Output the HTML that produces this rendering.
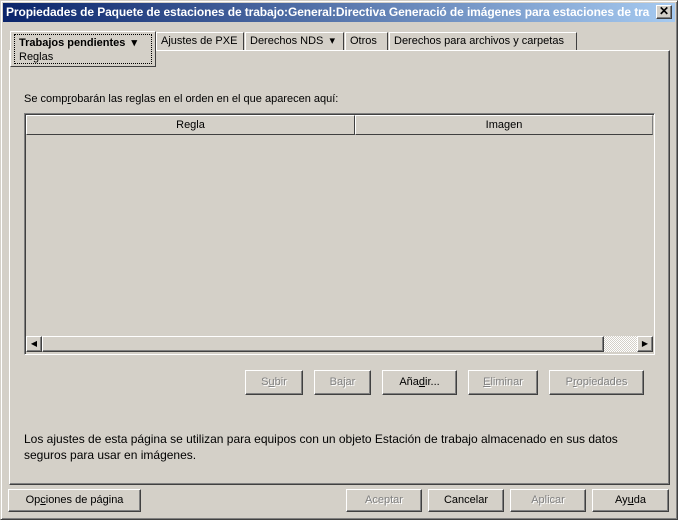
<!DOCTYPE html><html><head><style>
*{box-sizing:border-box}
body{margin:0;width:678px;height:520px;background:#d4d0c8;font-family:"Liberation Sans",sans-serif;font-size:11px;color:#000;position:relative;overflow:hidden}
.a{position:absolute}
.win{left:0;top:0;width:678px;height:520px;border:1px solid;border-color:#d4d0c8 #404040 #404040 #d4d0c8;box-shadow:inset 1px 1px #fff,inset -1px -1px #808080}
.title{left:3px;top:3px;width:672px;height:19px;background:linear-gradient(90deg,#0a246a,#a6caf0);}
.tt{left:6px;top:3px;width:646px;height:19px;color:#fff;font-weight:bold;font-size:12px;line-height:19px;white-space:nowrap;overflow:hidden;letter-spacing:-0.1px}
.btn{border:1px solid;border-color:#fff #404040 #404040 #fff;box-shadow:inset -1px -1px #808080;text-align:center;line-height:22px;background:#d4d0c8}
.dis{color:#808080;text-shadow:1px 1px #fff}
.tab{top:32px;height:18px;border:1px solid;border-color:#fff #404040 transparent #fff;border-bottom:none;line-height:16px;padding:0 4px;background:#d4d0c8;white-space:nowrap}
.raise{border:1px solid;border-color:#fff #808080 #808080 #fff}
</style></head><body>
<div class="a win"></div>
<div class="a title"></div>
<div class="a tt">Propiedades de Paquete de estaciones de trabajo:General:Directiva Generació de imágenes para estaciones de tra</div>
<div class="a btn" style="left:656px;top:5px;width:16px;height:14px;line-height:11px;font-weight:bold;font-size:12px">✕</div>
<div class="a" style="left:9px;top:50px;width:661px;height:435px;border:1px solid;border-color:#fff #404040 #404040 #fff;box-shadow:inset -1px -1px #808080"></div>
<div class="a tab" style="left:156px;width:88px">Ajustes de PXE</div>
<div class="a tab" style="left:245px;width:99px">Derechos NDS&nbsp; ▾</div>
<div class="a tab" style="left:345px;width:43px">Otros</div>
<div class="a tab" style="left:389px;width:188px">Derechos para archivos y carpetas</div>
<div class="a" style="left:10px;top:31px;width:146px;height:36px;border:1px solid;border-color:#fff #404040 #404040 #fff;background:#d4d0c8;padding:2px 3px">
<div style="border:1px dotted #000;height:30px;padding:1px 4px;line-height:14px"><b>Trabajos pendientes&nbsp; ▾</b><br>Reglas</div></div>
<div class="a" style="left:24px;top:93px">Se comp<u>r</u>obarán las reglas en el orden en el que aparecen aquí:</div>
<div class="a" style="left:24px;top:113px;width:631px;height:242px;border:1px solid;border-color:#808080 #fff #fff #808080;background:#d4d0c8;box-shadow:inset 1px 1px #404040"></div>
<div class="a raise" style="left:26px;top:115px;width:329px;height:20px;text-align:center;line-height:18px;border-right-color:#404040;border-bottom-color:#404040">Regla</div>
<div class="a raise" style="left:355px;top:115px;width:298px;height:20px;text-align:center;line-height:18px;border-bottom-color:#404040">Imagen</div>
<div class="a btn" style="left:26px;top:336px;width:16px;height:16px;line-height:14px;font-size:8px">◀</div>
<div class="a btn" style="left:42px;top:336px;width:562px;height:16px"></div>
<div class="a" style="left:604px;top:336px;width:33px;height:16px;background:repeating-conic-gradient(#fff 0 25%,#d4d0c8 0 50%) 0 0/2px 2px"></div>
<div class="a btn" style="left:637px;top:336px;width:16px;height:16px;line-height:14px;font-size:8px">▶</div>
<div class="a btn dis" style="left:245px;top:370px;width:58px;height:25px">S<u>u</u>bir</div>
<div class="a btn dis" style="left:314px;top:370px;width:57px;height:25px">Bajar</div>
<div class="a btn" style="left:382px;top:370px;width:75px;height:25px">Aña<u>d</u>ir...</div>
<div class="a btn dis" style="left:468px;top:370px;width:70px;height:25px"><u>E</u>liminar</div>
<div class="a btn dis" style="left:549px;top:370px;width:95px;height:25px">P<u>r</u>opiedades</div>
<div class="a" style="left:24px;top:431px;font-size:12px;line-height:16px;width:625px">Los ajustes de esta página se utilizan para equipos con un objeto Estación de trabajo almacenado en sus datos seguros para usar en imágenes.</div>
<div class="a btn" style="left:8px;top:489px;width:133px;height:23px;line-height:21px">Op<u>c</u>iones de página</div>
<div class="a btn dis" style="left:346px;top:489px;width:76px;height:23px;line-height:21px">Aceptar</div>
<div class="a btn" style="left:428px;top:489px;width:76px;height:23px;line-height:21px">Cancelar</div>
<div class="a btn dis" style="left:510px;top:489px;width:76px;height:23px;line-height:21px">Aplicar</div>
<div class="a btn" style="left:592px;top:489px;width:77px;height:23px;line-height:21px">Ay<u>u</u>da</div>
</body></html>
